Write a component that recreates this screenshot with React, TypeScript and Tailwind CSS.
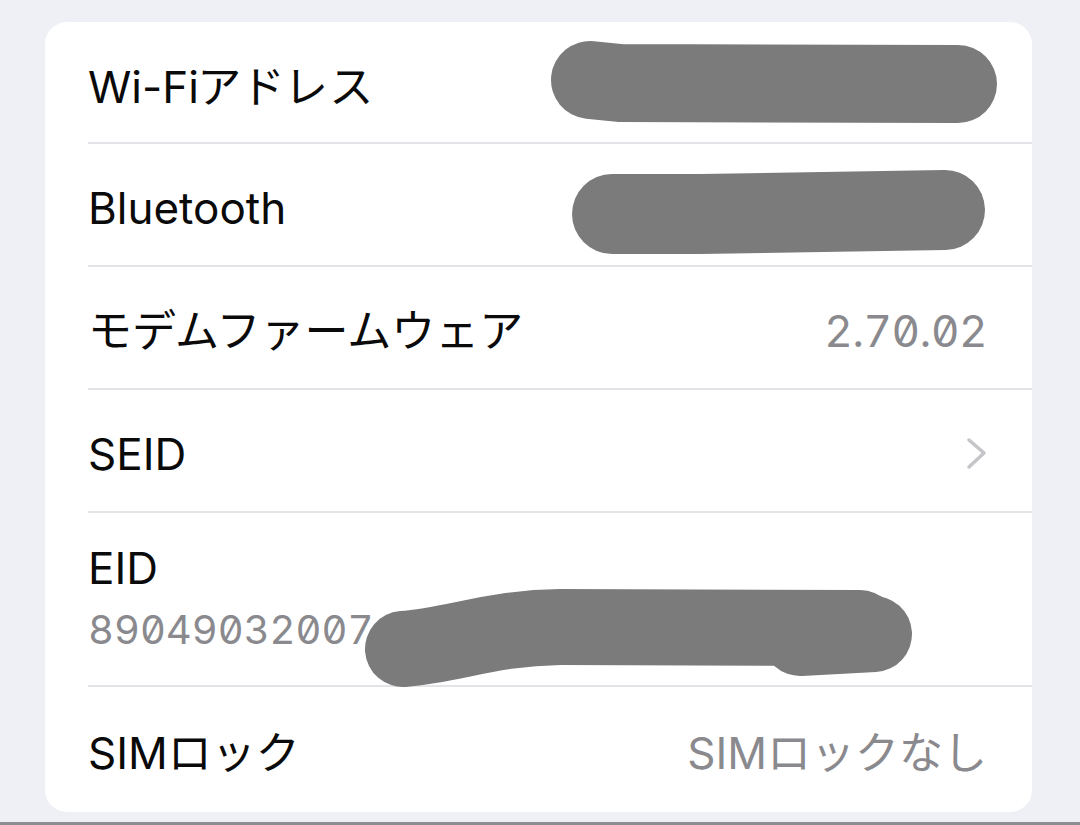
import React from "react";

const font = "font-['Inter','Noto_Sans_CJK_JP',sans-serif]";

type RowProps = {
  label: React.ReactNode;
  value?: string;
  chevron?: boolean;
  h: string;
  pad?: string;
  labelClass?: string;
  valueClass?: string;
  last?: boolean;
};

const Row = ({ label, value, chevron, h, pad = "pt-[6px]", labelClass = "", valueClass = "", last }: RowProps) => {
  return (
    <div className={`${h} pl-[43px]`}>
      <div
        className={`flex h-full items-center justify-between pr-[45px] ${pad} ${
          last ? "" : "border-b-2 border-[#e3e3e8]"
        }`}
      >
        <span className={`text-[44px] leading-none text-[#0a0a0a] ${labelClass}`}>{label}</span>
        {value && (
          <span className={`text-[44px] leading-none text-[#8a8a8e] ${valueClass}`}>{value}</span>
        )}
        {chevron && (
          <svg width="22" height="34" viewBox="0 0 22 34" className="mr-[-1px]">
            <polyline
              points="3,3 18,16 3,30"
              fill="none"
              stroke="#c5c5c9"
              strokeWidth="3.5"
              strokeLinecap="round"
              strokeLinejoin="round"
            />
          </svg>
        )}
      </div>
    </div>
  );
};

const Redactions = () => (
  <svg
    width="1080"
    height="825"
    viewBox="0 0 1080 825"
    className="pointer-events-none absolute left-0 top-0"
  >
    <g stroke="#7b7b7b" strokeLinecap="round" strokeLinejoin="round" fill="none">
      <path d="M590 80 L620 83 L958 84" strokeWidth="78" />
      <path d="M612 214 L700 214 L945 210" strokeWidth="80" />
      <path d="M403 649 C455 645 490 628 560 627 L860 628" strokeWidth="76" />
      <path d="M800 638 L874 634" strokeWidth="76" />
    </g>
  </svg>
);

export default function App() {
  return (
    <div className={`relative flex h-[825px] w-[1080px] flex-col bg-[#efeff6] ${font}`}>
      <div className="ml-[45px] mr-[48px] mt-[22px] flex h-[790px] flex-col overflow-hidden rounded-[22px] bg-white">
        <Row
          label={
            <>
              Wi-Fi
              <span className="tracking-[6px] [font-feature-settings:'palt']">アドレス</span>
            </>
          }
          h="h-[122px]"
          pad="pt-[10px]"
        />
        <Row label="Bluetooth" h="h-[123px]" />
        <Row
          label="モデムファームウェア"
          value="2.70.02"
          valueClass="text-[42px] tracking-[-0.5px] tabular-nums slashed-zero"
          h="h-[123px]"
        />
        <Row label="SEID" chevron h="h-[123px]" />
        <div className="h-[174px] pl-[43px]">
          <div className="flex h-full flex-col justify-center border-b-2 border-[#e3e3e8] pr-[45px]">
            <span className="text-[44px] leading-[61px] text-[#0a0a0a]">EID</span>
            <span className="text-[40px] leading-[61px] text-[#8a8a8e] tabular-nums slashed-zero">
              89049032007
            </span>
          </div>
        </div>
        <Row label="SIMロック" value="SIMロックなし" h="h-[125px]" last />
      </div>
      <div className="mt-auto h-[3px] w-full bg-[#8c8c92]" />
      <Redactions />
    </div>
  );
}
